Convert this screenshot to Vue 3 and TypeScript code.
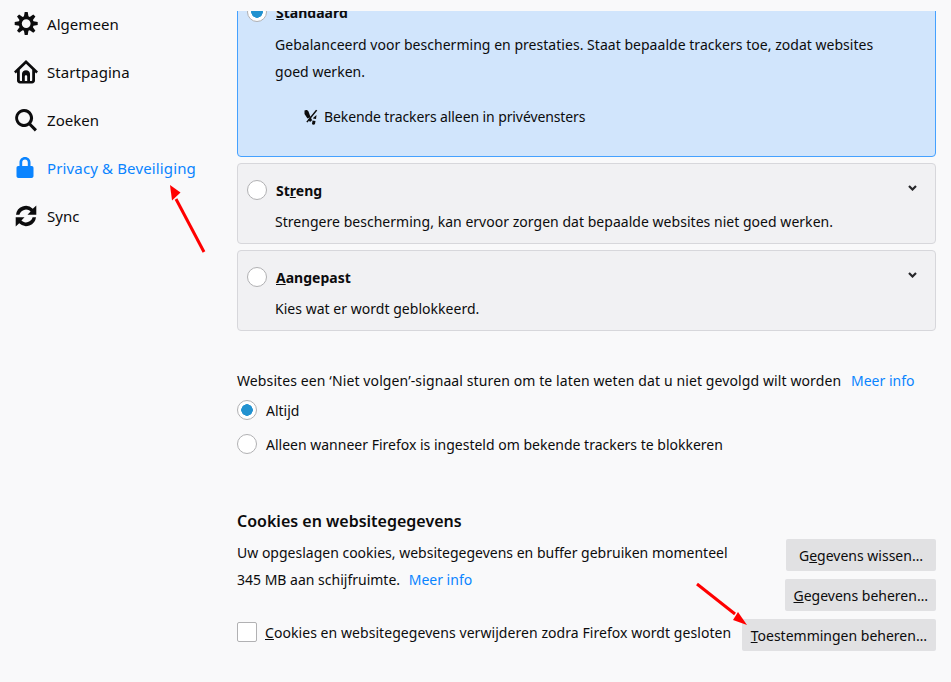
<template>
  <div class="page">
    <nav class="sidebar">
      <div v-for="item in navItems" :key="item.label" class="nav-item" :class="{ active: item.active }">
        <svg class="nav-icon" viewBox="0 0 24 24" aria-hidden="true"><path :d="item.icon" fill-rule="evenodd" /></svg>
        <span>{{ item.label }}</span>
      </div>
    </nav>

    <main class="content">
      <div class="clip">
        <section class="card selected">
          <div class="card-head">
            <span class="radio checked"></span>
            <span class="card-title"><u>S</u>tandaard</span>
          </div>
          <p class="card-text">
            Gebalanceerd voor bescherming en prestaties. Staat bepaalde trackers toe, zodat websites goed werken.
          </p>
          <div class="tracker-row">
            <svg class="tracker-icon" viewBox="0 0 16 16" aria-hidden="true">
              <path d="M1.500 1.500C3 .5 5 1 5.500 2.500L7.500 8 4.500 9.500 1.500 5zM5 10l3-1.200L9 11c-.2 1-1.500 2-2.500 1.500zM13 .8l1.300.8L4.500 13.500l-1.200-.8zM10.500 8.500 13.500 6 13 10l-3-.5zM9.500 11.500l3 .5-.5 3c-.5 1-2.500 1-3 0z" />
            </svg>
            <span>Bekende trackers alleen in privévensters</span>
          </div>
        </section>
      </div>

      <section class="card">
        <div class="card-head">
          <span class="radio"></span>
          <span class="card-title">St<u>r</u>eng</span>
          <svg class="chevron" viewBox="0 0 9 6" aria-hidden="true"><path d="M1 1l3.500 3.500L8 1" /></svg>
        </div>
        <p class="card-text">Strengere bescherming, kan ervoor zorgen dat bepaalde websites niet goed werken.</p>
      </section>

      <section class="card">
        <div class="card-head">
          <span class="radio"></span>
          <span class="card-title"><u>A</u>angepast</span>
          <svg class="chevron" viewBox="0 0 9 6" aria-hidden="true"><path d="M1 1l3.500 3.500L8 1" /></svg>
        </div>
        <p class="card-text">Kies wat er wordt geblokkeerd.</p>
      </section>

      <div class="dnt">
        <div class="dnt-text">
          Websites een ‘Niet volgen’-signaal sturen om te laten weten dat u niet gevolgd wilt worden
          <a class="link dnt-link">Meer info</a>
        </div>
        <label class="option first"><span class="radio checked"></span>Altijd</label>
        <label class="option"><span class="radio"></span>Alleen wanneer Firefox is ingesteld om bekende trackers te blokkeren</label>
      </div>

      <h2 class="heading">Cookies en websitegegevens</h2>
      <div class="cookies">
        <div class="cookies-left">
          <p class="cookies-text">
            Uw opgeslagen cookies, websitegegevens en buffer gebruiken momenteel<br />
            345 MB aan schijfruimte. <a class="link cookies-link">Meer info</a>
          </p>
          <label class="check-row"><span class="checkbox"></span><span><u>C</u>ookies en websitegegevens verwijderen zodra Firefox wordt gesloten</span></label>
        </div>
        <div class="buttons">
          <button class="btn wide">G<u>e</u>gevens wissen…</button>
          <button class="btn tight"><u>G</u>egevens beheren…</button>
          <button class="btn"><u>T</u>oestemmingen beheren…</button>
        </div>
      </div>
    </main>

    <svg class="arrows" viewBox="0 0 951 682" aria-hidden="true">
      <path d="M204 252 176 199" class="arrow-line" />
      <path d="M170 185l10.500 7.500-8.500 8z" class="arrow-head" />
      <path d="M697 584 735 614" class="arrow-line" />
      <path d="M747 625l-14-5 5-8z" class="arrow-head" />
    </svg>
  </div>
</template>

<script setup lang="ts">
interface NavItem {
  label: string
  icon: string
  active?: boolean
}

// ring with 8 narrow teeth, hole cut out through evenodd
function gearPath(): string {
  const cx = 12.2
  const cy = 11.6
  const pts: string[] = []
  for (let i = 0; i < 8; i++) {
    const a = (i * Math.PI) / 4 - Math.PI / 2
    const spots: [number, number][] = [
      [7.6, -0.3],
      [11.6, -0.13],
      [11.6, 0.13],
      [7.6, 0.3]
    ]
    for (const [r, d] of spots) {
      pts.push(`${(cx + r * Math.cos(a + d)).toFixed(2)} ${(cy + r * Math.sin(a + d)).toFixed(2)}`)
    }
  }
  const hole = `M${cx - 4.4} ${cy}a4.4 4.4 0 1 0 8.8 0a4.4 4.4 0 1 0-8.8 0z`
  return `M${pts.join('L')}z${hole}`
}

const navItems: NavItem[] = [
  {
    label: 'Algemeen',
    icon: gearPath()
  },
  {
    label: 'Startpagina',
    icon: 'M12 0 24 11.500l-1.800 1.900-1.200-1.100v8.200c0 1.600-1.200 3-3 3H6c-1.800 0-3-1.400-3-3v-8.200l-1.200 1.100L0 11.500zM12 3.800 5.800 9.700v10.600c0 .5.300.8.700.8h11c.4 0 .7-.3.700-.8V9.700zM8 21.100v-7.300c0-2 1.800-3.600 4-3.600s4 1.600 4 3.600v7.300h-2.800v-4.600c0-.7-.5-1.200-1.200-1.200s-1.200.5-1.200 1.200v4.600z'
  },
  {
    label: 'Zoeken',
    icon: 'M10 1a9 9 0 0 1 7.200 14.400l5.800 5.800-2.200 2.200-5.800-5.800A9 9 0 1 1 10 1zm0 3a6 6 0 1 0 0 12 6 6 0 0 0 0-12z'
  },
  {
    label: 'Privacy & Beveiliging',
    active: true,
    icon: 'M11 1c3.200 0 5.500 2.400 5.500 5.500V10h1.200c1.200 0 1.800.8 1.800 2v8c0 1.200-.8 2-2 2H4.500c-1.200 0-2-.8-2-2v-8c0-1.200.6-2 1.800-2h1.200V6.500C5.500 3.400 7.800 1 11 1zm0 2.600c-1.600 0-2.800 1.300-2.800 3V10h5.600V6.600c0-1.700-1.200-3-2.800-3z'
  },
  {
    label: 'Sync',
    icon: 'M2 10.800A10 10 0 0 1 18.800 4.700L22.300 1.500v9.300h-8.800l3.100-3.400A6.800 6.800 0 0 0 5.400 10.800zM22 13.200A10 10 0 0 1 5.200 19.300L1.700 22.500v-9.300h8.800l-3.100 3.400a6.800 6.800 0 0 0 11.200-3.400z'
  }
]
</script>

<style>
html,
body {
  margin: 0;
  background: #f9f9fa;
}
</style>

<style scoped>
.page {
  position: relative;
  width: 951px;
  height: 682px;
  overflow: hidden;
  display: flex;
  background: #f9f9fa;
  color: #0c0c0d;
  font-family: "Noto Sans", "Liberation Sans", sans-serif;
  font-size: 14px;
}

.sidebar {
  width: 237px;
  flex-shrink: 0;
}

.nav-item {
  height: 48px;
  display: flex;
  align-items: center;
  gap: 9px;
  padding-left: 14px;
  font-size: 15px;
  letter-spacing: 0.05px;
}

.nav-item.active {
  color: #0a84ff;
  letter-spacing: 0.14px;
}

.nav-icon {
  width: 24px;
  height: 24px;
  fill: currentColor;
}

.content {
  width: 699px;
  padding-top: 11px;
}

.clip {
  overflow: hidden;
  height: 146px;
}

.card {
  position: relative;
  box-sizing: border-box;
  background: #f1f1f3;
  border: 1px solid #d7d7db;
  border-radius: 4px;
  height: 81px;
  margin-top: 6px;
  padding: 0 9px;
}

.card.selected {
  margin-top: -26px;
  height: 172px;
  background: #d1e5fc;
  border-color: #45a1ff;
}

.card-head {
  display: flex;
  align-items: center;
  height: 20px;
  padding-top: 16px;
}

.radio {
  box-sizing: border-box;
  width: 20px;
  height: 20px;
  flex-shrink: 0;
  border: 1px solid #b1b1b3;
  border-radius: 50%;
  background: #fff;
  display: inline-block;
}

.radio.checked {
  background: radial-gradient(circle, #2292d0 0 5.500px, #fff 6px);
}

.card-title {
  margin-left: 9px;
  font-weight: 700;
  font-size: 14px;
}

.chevron {
  position: absolute;
  right: 18px;
  top: 21px;
  width: 9px;
  height: 6px;
  fill: none;
  stroke: #27272a;
  stroke-width: 2.200;
}

.card-text {
  margin: 8px 0 0 28px;
  line-height: 27px;
  padding-right: 20px;
  letter-spacing: 0.03px;
}

.selected .card-text {
  margin-top: 9px;
}

.tracker-row {
  display: flex;
  align-items: center;
  gap: 5px;
  margin: 22px 0 0 56px;
  letter-spacing: -0.1px;
}

.tracker-icon {
  width: 16px;
  height: 16px;
  fill: #0c0c0d;
}

.dnt {
  margin-top: 36px;
}

.dnt-text {
  line-height: 28px;
  letter-spacing: 0.11px;
}

.link {
  color: #0a84ff;
  letter-spacing: 0;
}

.dnt-link {
  margin-left: 6px;
}

.option {
  display: flex;
  align-items: center;
  gap: 9px;
  height: 34px;
}

.option.first {
  margin-top: -2px;
}

.heading {
  margin: 48px 0 0;
  font-size: 16px;
  font-weight: 600;
  line-height: 24px;
}

.cookies {
  display: flex;
  justify-content: space-between;
  margin-top: 6px;
}

.cookies-text {
  margin: 0;
  line-height: 27px;
}

.cookies-link {
  margin-left: 5px;
}

.check-row {
  display: flex;
  align-items: center;
  gap: 8px;
  margin-top: 29px;
  letter-spacing: 0.06px;
}

.checkbox {
  box-sizing: border-box;
  width: 20px;
  height: 20px;
  border: 1px solid #b1b1b3;
  border-radius: 2px;
  background: #fff;
}

.buttons {
  display: flex;
  flex-direction: column;
  align-items: flex-end;
  gap: 8px;
}

.btn {
  height: 32px;
  padding: 0 9px;
  border: 0;
  border-radius: 2px;
  background: #e1e1e3;
  color: #0c0c0d;
  font: inherit;
}

.btn.wide {
  padding: 0 13px;
}

.btn.tight {
  padding: 0 8px;
}

.arrows {
  position: absolute;
  inset: 0;
  width: 951px;
  height: 682px;
  pointer-events: none;
}

.arrow-line {
  stroke: #f00;
  stroke-width: 3;
  fill: none;
}

.arrow-head {
  fill: #f00;
}
</style>
